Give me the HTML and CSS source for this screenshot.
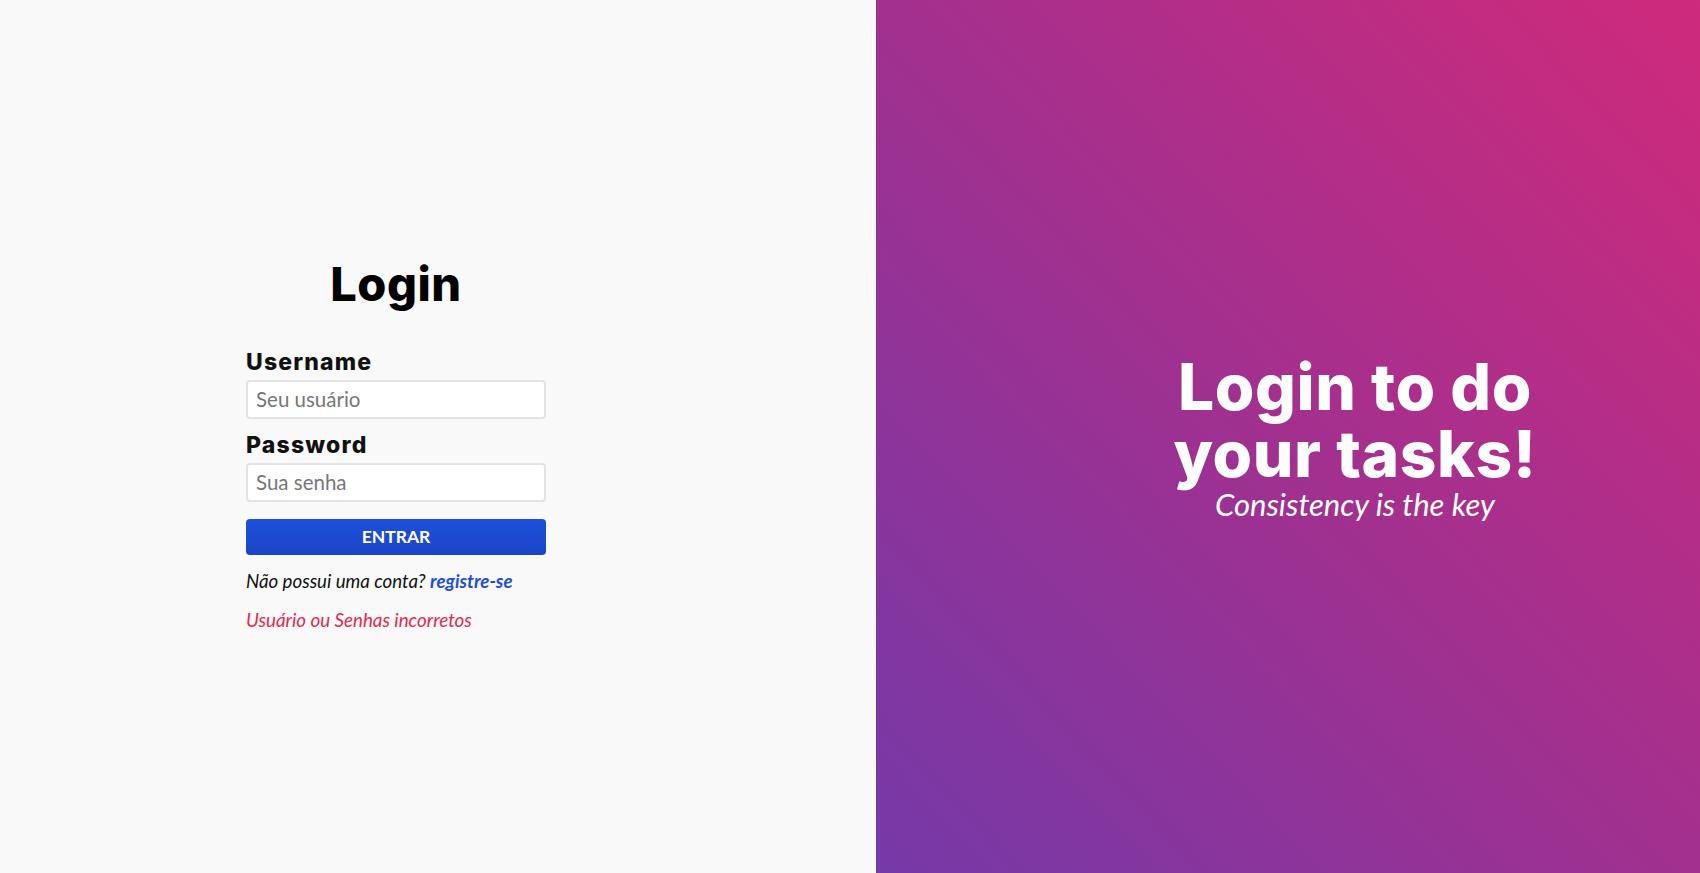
FILE: index.html
```html
<!DOCTYPE html>
<html lang="pt-BR">
<head>
<meta charset="utf-8">
<title>Login</title>
<link rel="stylesheet" href="styles.css">
</head>
<body>
<main class="page">
  <section class="left">
    <form class="login-box">
      <h1 class="title">Login</h1>
      <label class="label" for="user">Username</label>
      <input class="field" id="user" type="text" placeholder="Seu usuário">
      <label class="label label-pass" for="pass">Password</label>
      <input class="field" id="pass" type="password" placeholder="Sua senha">
      <button class="btn" type="button">ENTRAR</button>
      <p class="signup">Não possui uma conta? <a class="link" href="#">registre-se</a></p>
      <p class="error">Usuário ou Senhas incorretos</p>
    </form>
  </section>
  <section class="right">
    <div class="hero">
      <h2 class="hero-title">Login to do<br>your tasks!</h2>
      <p class="hero-sub">Consistency is the key</p>
    </div>
  </section>
</main>
</body>
</html>
```

FILE: styles.css
```css
* { box-sizing: border-box; }
html, body { margin: 0; padding: 0; height: 100%; }
body { font-family: "Lato", "Liberation Sans", sans-serif; background: #f9f9f9; }
.page { display: flex; height: 873px; }
.left {
  width: 876px;
  background: #f9f9f9;
  display: flex;
  justify-content: center;
  align-items: center;
  padding-right: 84px;
  padding-top: 14px;
}
.login-box { width: 300px; display: flex; flex-direction: column; }
.title {
  font-family: "Inter", "Open Sans", sans-serif;
  font-weight: 800;
  font-size: 47px;
  line-height: 56px;
  margin: 0 0 36px;
  text-align: center;
  color: #000;
  letter-spacing: 0.5px;
}
.label {
  font-family: "Inter", "Open Sans", sans-serif;
  font-weight: 800;
  font-size: 23px;
  line-height: 28px;
  color: #111;
  margin-bottom: 4px;
  letter-spacing: 1.2px;
}
.label-pass { margin-top: 12px; }
.field {
  height: 39px;
  width: 300px;
  border: 2px solid #e3e3e3;
  border-radius: 4px;
  background: #fff;
  font-family: "Lato", sans-serif;
  font-size: 20.5px;
  padding: 0 8px;
  color: #333;
  outline: none;
}
.field::placeholder { color: #777; }
.btn {
  margin-top: 17px;
  height: 36px;
  border: none;
  border-radius: 4px;
  background: linear-gradient(#1d50da, #1a45c9);
  color: #fff;
  font-family: "Lato", sans-serif;
  font-weight: 700;
  font-size: 17.5px;
  cursor: pointer;
}
.signup {
  margin: 14px 0 0;
  font-style: italic;
  font-size: 18.7px;
  line-height: 24px;
  color: #111;
}
.link { color: #1d4ed8; font-weight: 700; text-decoration: none; }
.error {
  margin: 15px 0 0;
  font-style: italic;
  font-size: 18.8px;
  line-height: 24px;
  color: #e5294f;
}
.right {
  flex: 1;
  background: linear-gradient(to top right, #7539a8 0%, #a2308f 50%, #cf2a7b 100%);
  display: flex;
  justify-content: center;
  align-items: center;
  padding-left: 134px;
}
.hero { text-align: center; color: #fff; }
.hero-title {
  font-family: "Inter", "Open Sans", sans-serif;
  font-weight: 800;
  font-size: 64px;
  line-height: 67px;
  margin: 0;
  letter-spacing: 0.6px;
}
.hero-sub {
  margin: 0;
  font-style: italic;
  font-size: 31px;
  line-height: 34px;
}
```
